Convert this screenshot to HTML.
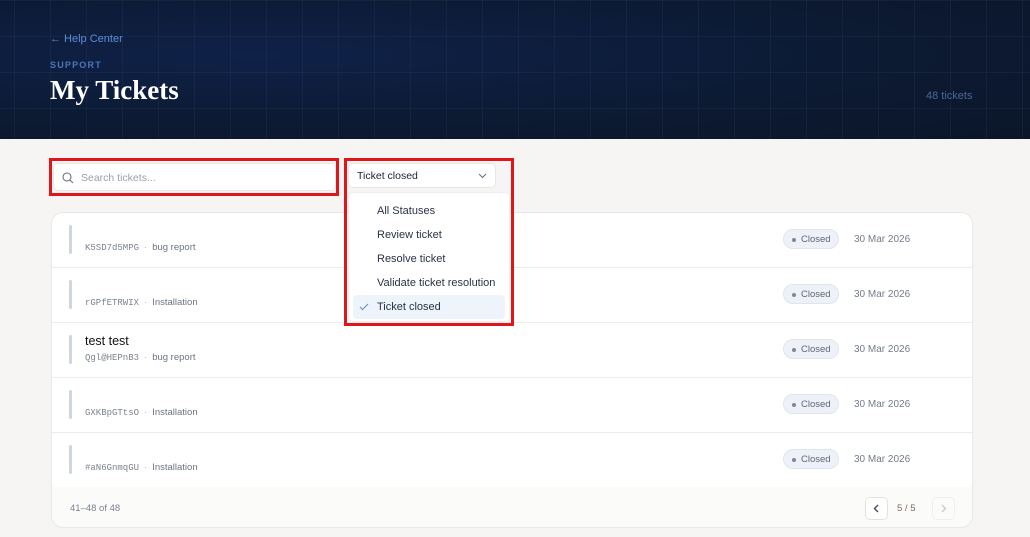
<!DOCTYPE html>
<html><head><style>
*{box-sizing:border-box;margin:0;padding:0}
body{width:1030px;height:537px;overflow:hidden;background:#f6f5f3;font-family:"Liberation Sans",sans-serif;position:relative}
.hdr{position:absolute;left:0;top:0;width:1030px;height:139px;
background-image:linear-gradient(rgba(60,80,120,.16) 1px,transparent 1px),linear-gradient(90deg,rgba(60,80,120,.16) 1px,transparent 1px),radial-gradient(ellipse at 25% 40%,#0f2148 0%,#0c1a33 55%,#0b1629 100%);
background-size:36px 36px,36px 36px,100% 100%;background-position:0 0,14px 0,0 0}
.abs{position:absolute}
.back{left:50px;top:33px;color:#5b8fd6;font-size:11px}
.sup{left:50px;top:60px;color:#4a78b8;font-size:9px;letter-spacing:1.2px;font-weight:bold}
.h1{left:50px;top:75px;color:#fff;font-family:"Liberation Serif",serif;font-weight:bold;font-size:27px}
.cnt{left:926px;top:90px;color:#4a6796;font-size:11px}
.red{border:3px solid #e0161b}
.search{left:53px;top:163px;width:283px;height:28px;background:#fff;border:1px solid #e6e6e6;border-radius:5px}
.search span{position:absolute;left:27px;top:8px;font-size:10.5px;color:#9aa0aa}
.sel{left:348px;top:163px;width:148px;height:25px;background:#fff;border:1px solid #e6e6e6;border-radius:5px;font-size:10.5px;color:#1a2235}
.menu{left:348px;top:192px;width:162px;height:130px;background:#fff;border:1px solid #eee;border-radius:5px;font-size:11px;color:#2a3345}
.menu div{position:absolute;left:28px}
.card{left:51px;top:212px;width:922px;height:316px;background:#fff;border:1px solid #e8e8e8;border-radius:12px;overflow:hidden}
.row{position:absolute;left:0;width:922px;height:55px;border-bottom:1px solid #ececec}
.bar{position:absolute;left:17px;top:12px;width:3px;height:29px;background:#cfd6df;border-radius:2px}
.meta{position:absolute;left:33px;top:29px;font-size:9.5px;color:#6b7383}
.meta .id{font-family:"Liberation Mono",monospace;font-size:9px;color:#7b8290}
.meta .dot{color:#b0b5bd;margin:0 5px}
.ttl{position:absolute;left:33px;top:11px;font-size:12.5px;color:#111;font-weight:500}
.pill{position:absolute;left:731px;top:16px;width:56px;height:20px;border-radius:10px;background:#eef2f8;border:1px solid #dfe5ee;font-size:9.5px;color:#5d6779;padding:4px 0 0 17px}
.pill:before{content:"";position:absolute;left:8px;top:8px;width:4px;height:4px;border-radius:50%;background:#7f8799}
.date{position:absolute;left:802px;top:21px;font-size:10px;color:#737b8a}
.foot{position:absolute;left:0;top:274px;width:922px;height:42px;background:#fbfbfa}
</style></head><body>
<div class="hdr"></div>
<div class="abs back">← Help Center</div>
<div class="abs sup">SUPPORT</div>
<div class="abs h1">My Tickets</div>
<div class="abs cnt">48 tickets</div>

<div class="abs card">
 <div class="row" style="top:0"><div class="bar"></div><div class="meta"><span class="id">K5SD7d5MPG</span><span class="dot">·</span>bug report</div><div class="pill">Closed</div><div class="date">30 Mar 2026</div></div>
 <div class="row" style="top:55px"><div class="bar"></div><div class="meta"><span class="id">rGPfETRWIX</span><span class="dot">·</span>Installation</div><div class="pill">Closed</div><div class="date">30 Mar 2026</div></div>
 <div class="row" style="top:110px"><div class="bar"></div><div class="ttl">test test</div><div class="meta"><span class="id">Qgl@HEPnB3</span><span class="dot">·</span>bug report</div><div class="pill">Closed</div><div class="date">30 Mar 2026</div></div>
 <div class="row" style="top:165px"><div class="bar"></div><div class="meta"><span class="id">GXKBpGTtsO</span><span class="dot">·</span>Installation</div><div class="pill">Closed</div><div class="date">30 Mar 2026</div></div>
 <div class="row" style="top:220px"><div class="bar"></div><div class="meta"><span class="id">#aN6GnmqGU</span><span class="dot">·</span>Installation</div><div class="pill">Closed</div><div class="date">30 Mar 2026</div></div>
 <div class="foot">
  <div class="abs" style="left:18px;top:16px;font-size:9.5px;color:#7a8291">41–48 of 48</div>
  <div class="abs" style="left:813px;top:10px;width:23px;height:23px;border:1px solid #e2e2e2;border-radius:5px;background:#fff"><svg width="21" height="21" viewBox="0 0 21 21"><path d="M12 7l-3.5 3.5L12 14" fill="none" stroke="#444c5a" stroke-width="1.4"/></svg></div>
  <div class="abs" style="left:845px;top:16px;font-size:9.5px;color:#7a6a60">5 / 5</div>
  <div class="abs" style="left:880px;top:10px;width:23px;height:23px;border:1px solid #efefef;border-radius:5px"><svg width="21" height="21" viewBox="0 0 21 21"><path d="M9 7l3.5 3.5L9 14" fill="none" stroke="#c8ccd2" stroke-width="1.3"/></svg></div>
 </div>
</div>

<div class="abs red" style="left:49px;top:158px;width:290px;height:38px"></div>
<div class="abs search"><svg class="abs" style="left:8px;top:8px" width="12" height="12" viewBox="0 0 12 12"><circle cx="5" cy="5" r="4" fill="none" stroke="#6a7180" stroke-width="1.1"/><path d="M8 8l3 3" stroke="#6a7180" stroke-width="1.1"/></svg><span>Search tickets...</span></div>

<div class="abs red" style="left:344px;top:158px;width:170px;height:168px"></div>
<div class="abs sel"><span class="abs" style="left:8px;top:6px">Ticket closed</span><svg class="abs" style="left:129px;top:9px" width="9" height="6" viewBox="0 0 9 6"><path d="M1 1l3.5 3.5L8 1" fill="none" stroke="#6a7180" stroke-width="1.1"/></svg></div>
<div class="abs menu">
 <div style="top:12px">All Statuses</div>
 <div style="top:36px">Review ticket</div>
 <div style="top:60px">Resolve ticket</div>
 <div style="top:84px">Validate ticket resolution</div>
 <div style="left:4px;top:102px;width:152px;height:24px;background:#eef4fc;border-radius:4px"></div>
 <svg class="abs" style="left:10px;top:110px" width="10" height="8" viewBox="0 0 10 8"><path d="M1 4l2.5 2.5L9 1" fill="none" stroke="#6f93c8" stroke-width="1.2"/></svg>
 <div style="top:108px">Ticket closed</div>
</div>
</body></html>
